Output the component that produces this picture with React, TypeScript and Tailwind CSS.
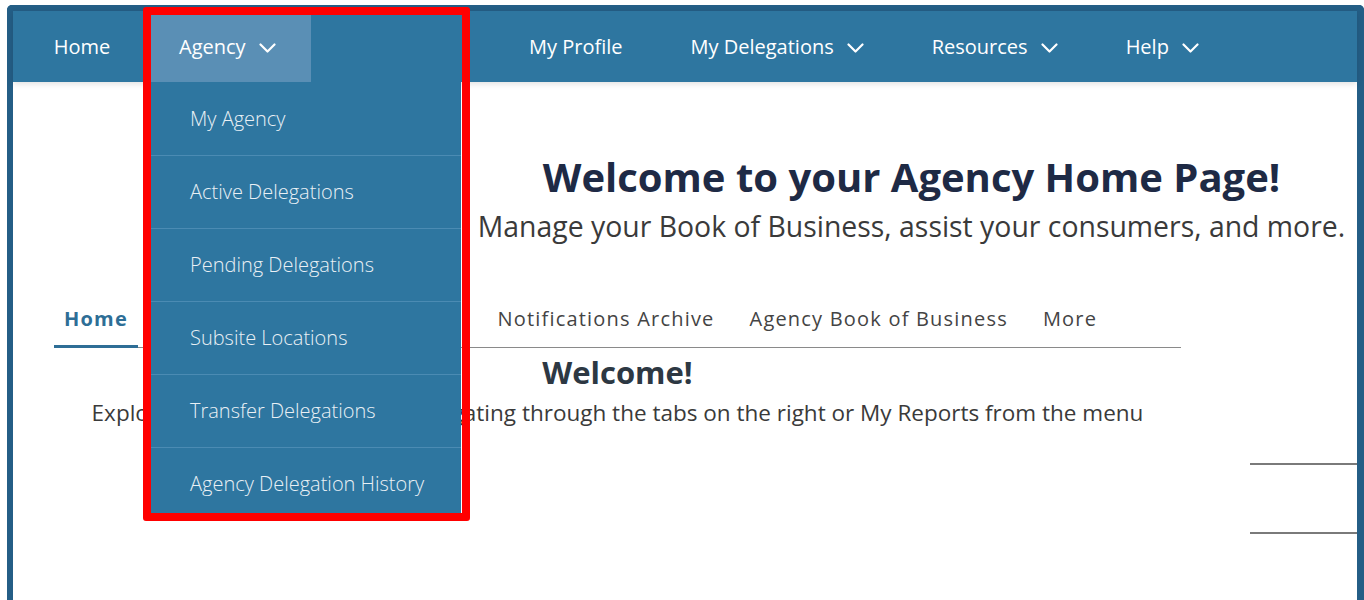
import React from "react";

const menuLinks = [
  { label: "Home" },
  { label: "Agency", caret: true, open: true },
  { label: "", spacer: true },
  { label: "My Profile" },
  { label: "My Delegations", caret: true },
  { label: "Resources", caret: true },
  { label: "Help", caret: true },
];

const agencyItems = [
  "My Agency",
  "Active Delegations",
  "Pending Delegations",
  "Subsite Locations",
  "Transfer Delegations",
  "Agency Delegation History",
];

function Caret() {
  return (
    <svg width="17" height="10" viewBox="0 0 17 10" fill="none" className="ml-[13px] mt-[2px]">
      <polyline points="1.5,1.5 8.5,8.5 15.5,1.5" stroke="currentColor" strokeWidth="2.2" strokeLinecap="round" strokeLinejoin="round" />
    </svg>
  );
}

function AgencyMenu() {
  return (
    <div className="absolute left-0 top-full z-10 w-[310px] bg-[#2e76a0]">
      {agencyItems.map((item, i) => (
        <div
          key={item}
          className={`flex h-[73px] items-center pl-[39px] text-[20px] font-light text-[#e9f0f5] ${i > 0 ? "border-t border-[#4b8bb3]" : ""}`}
        >
          {item}
        </div>
      ))}
    </div>
  );
}

function TopNav() {
  return (
    <nav className="relative z-10 flex h-[71px] bg-[#2e76a0] text-[20px] text-white shadow-[0_2px_6px_rgba(0,0,0,0.12)]">
      {menuLinks.map((link, i) => {
        if (link.spacer) return <div key={i} className="w-[184px]" />;
        if (link.label === "Home")
          return (
            <div key={i} className="flex w-[138px] items-center justify-center">
              Home
            </div>
          );
        if (link.open)
          return (
            <div key={i} className="relative flex w-[160px] items-center bg-[#5a8fb5] pl-[28px]">
              {link.label}
              <Caret />
              <AgencyMenu />
            </div>
          );
        return (
          <div key={i} className="flex items-center px-[34px]">
            {link.label}
            {link.caret && <Caret />}
          </div>
        );
      })}
    </nav>
  );
}

export default function App() {
  return (
    <div className="relative h-[600px] w-[1364px] overflow-hidden bg-white font-['Open_Sans','Noto_Sans',sans-serif]">
      <div className="ml-[7px] mt-[5px] h-[595px] rounded-t-[5px] border-l-[6px] border-r-[7px] border-t-[6px] border-[#245e86]">
        <TopNav />

        <main>
          <div className="flex">
            <div className="w-[453px] shrink-0" />
            <div className="flex-1 pt-[68px] text-center">
              <h1 className="text-[40px] font-bold leading-[54px] text-[#1e2a45]">
                Welcome to your Agency Home Page!
              </h1>
              <p className="mt-[4px] text-[28.4px] leading-[36px] text-[#3a3a3a]">
                Manage your Book of Business, assist your consumers, and more.
              </p>
            </div>
          </div>

          <div className="mt-[51px] flex">
            <div className="ml-[41px] w-[1127px] shrink-0">
              <div className="flex border-b border-[#8a8a8a] text-[20px] leading-[28px] tracking-[1.2px] text-[#444]">
                <div className="-mb-px border-b-[3px] border-[#2e6e96] px-[10px] pb-[11px] pt-[10px] font-bold text-[#2e6e96]">
                  Home
                </div>
                <div className="w-[342px]" />
                <div className="px-[17.5px] pb-[14px] pt-[10px]">Notifications Archive</div>
                <div className="px-[17.5px] pb-[14px] pt-[10px]">Agency Book of Business</div>
                <div className="px-[17.5px] pb-[14px] pt-[10px]">More</div>
              </div>
              <h2 className="mt-[4px] text-center text-[31px] font-bold leading-[40px] text-[#2d3843]">
                Welcome!
              </h2>
              <p className="mt-[5px] text-center text-[22.5px] leading-[32px] text-[#3a3a3a]">
                Explore your agency's data by navigating through the tabs on the right or My Reports from the menu
              </p>
            </div>
            <div className="ml-[69px] flex-1 pt-[168px]">
              <div className="h-[69px] border-t-2 border-[#7a7a7a]" />
              <div className="h-[69px] border-t-2 border-[#7a7a7a]" />
            </div>
          </div>
        </main>
      </div>

      {/* highlight box around the Agency menu */}
      <div className="pointer-events-none absolute left-[143px] top-[7px] z-20 h-[514px] w-[327px] rounded-[3px] border-[8px] border-[#ff0000]" />
    </div>
  );
}
